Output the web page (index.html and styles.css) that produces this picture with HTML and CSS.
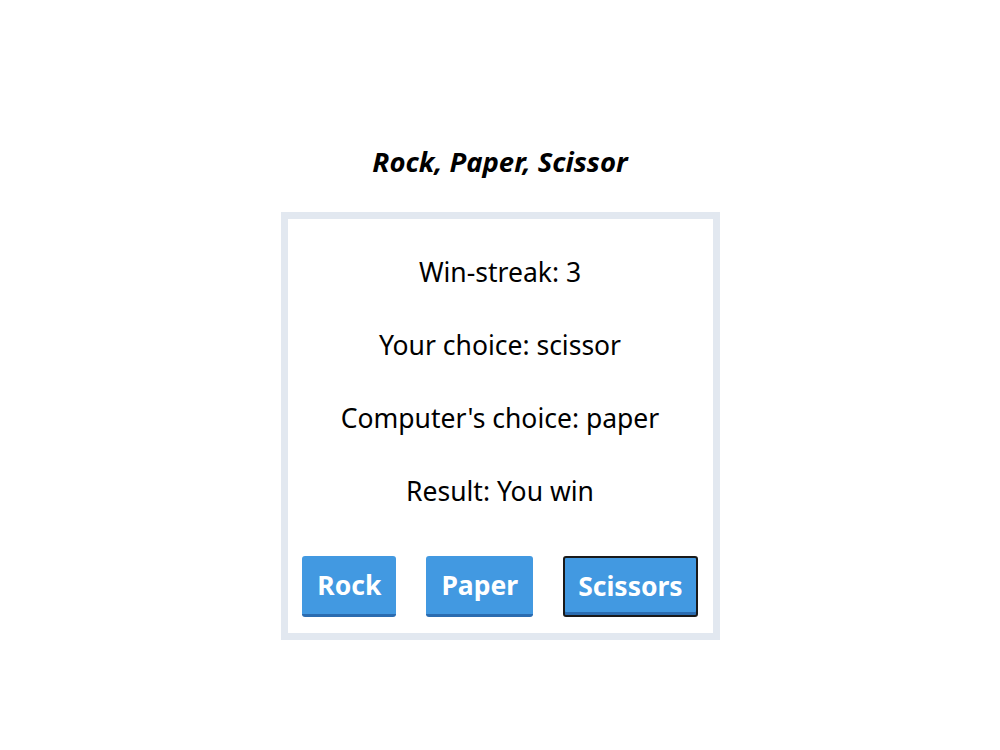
FILE: index.html
```html
<!DOCTYPE html>
<html lang="en">
<head>
  <meta charset="UTF-8">
  <title>Rock, Paper, Scissor</title>
  <link rel="stylesheet" href="styles.css">
</head>
<body>

<h1>Rock, Paper, Scissor</h1>

<div class="card">
  <p class="line">Win-streak: <span id="streak">3</span></p>
  <p class="line">Your choice: <span id="player">scissor</span></p>
  <p class="line">Computer's choice: <span id="computer">paper</span></p>
  <p class="line">Result: <span id="result">You win</span></p>

  <div class="buttons">
    <button class="btn">Rock</button>
    <button class="btn">Paper</button>
    <button class="btn active">Scissors</button>
  </div>
</div>

</body>
</html>
```

FILE: styles.css
```css
body {
  margin: 0;
  padding: 0;
  background-color: #fff;
  font-family: "Noto Sans", "Open Sans", sans-serif;
  color: #000;
  text-align: center;
}

h1 {
  margin: 144px 0 32px;
  font-size: 27.5px;
  line-height: 36px;
  font-style: italic;
  font-weight: bold;
}

.card {
  width: 395px;
  margin: 0 auto;
  border: 7px solid #e2e8f0;
  padding: 35px 15px 16px;
  display: flex;
  flex-direction: column;
  gap: 37px;
}

.line {
  margin: 0;
  font-size: 26.5px;
  line-height: 36px;
}

.buttons {
  display: flex;
  justify-content: center;
  gap: 30px;
  margin-top: 10px;
}

.btn {
  height: 61px;
  padding: 0 15px;
  background-color: #4299e1;
  color: #fff;
  font-family: inherit;
  font-size: 26.5px;
  font-weight: bold;
  border: 0;
  border-bottom: 3px solid #2b6cb0;
  border-radius: 3px;
  cursor: pointer;
}

/* last clicked button keeps the focus outline */
.btn.active {
  padding: 0 13px 2px;
  border: 2px solid #1a1a1a;
  box-shadow: inset 0 -3px 0 #2b6cb0;
}
```
